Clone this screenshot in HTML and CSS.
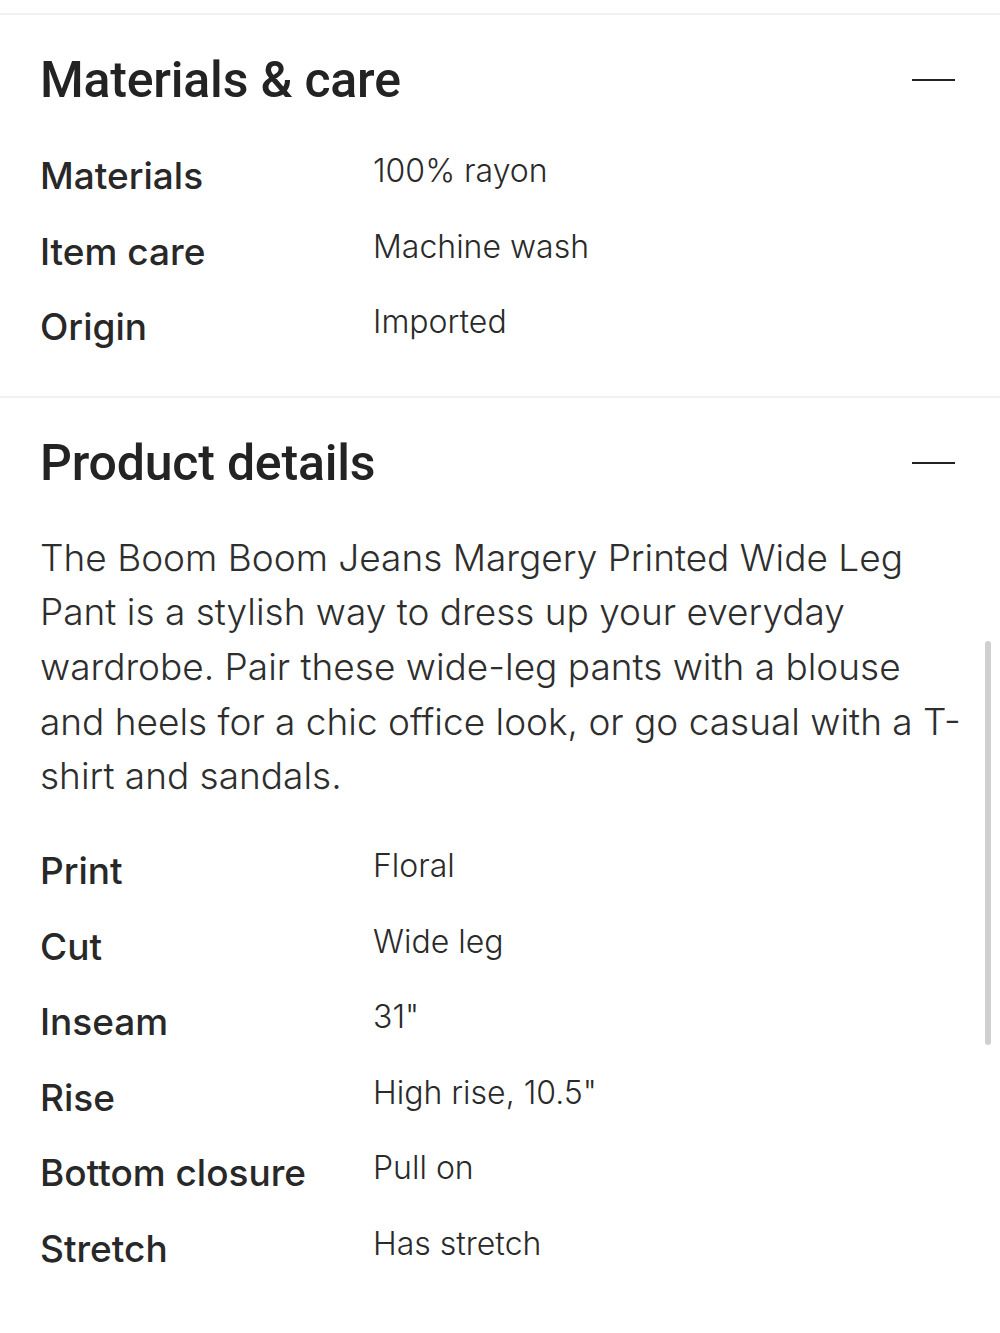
FILE: index.html
```html
<!DOCTYPE html>
<html lang="en">
<head>
  <meta charset="UTF-8" />
  <meta name="viewport" content="width=device-width, initial-scale=1.0" />
  <title>Product info</title>
  <link rel="stylesheet" href="styles.css">
</head>
<body>
  <div class="page">
    <section class="panel panel-care">
      <div class="panel-head">
        <h2>Materials &amp; care</h2>
        <span class="collapse"></span>
      </div>
      <dl class="specs">
        <dt>Materials</dt><dd>100% rayon</dd>
        <dt>Item care</dt><dd>Machine wash</dd>
        <dt>Origin</dt><dd>Imported</dd>
      </dl>
    </section>

    <section class="panel panel-details">
      <div class="panel-head">
        <h2>Product details</h2>
        <span class="collapse"></span>
      </div>
      <p class="desc">The Boom Boom Jeans Margery Printed Wide Leg Pant is a stylish way to dress up your everyday wardrobe. Pair these wide-leg pants with a blouse and heels for a chic office look, or go casual with a T-shirt and sandals.</p>
      <dl class="specs">
        <dt>Print</dt><dd>Floral</dd>
        <dt>Cut</dt><dd>Wide leg</dd>
        <dt>Inseam</dt><dd>31"</dd>
        <dt>Rise</dt><dd>High rise, 10.5"</dd>
        <dt>Bottom closure</dt><dd>Pull on</dd>
        <dt>Stretch</dt><dd>Has stretch</dd>
      </dl>
    </section>
  </div>
  <div class="scrollbar"></div>
</body>
</html>
```

FILE: styles.css
```css
body { margin: 0; background: #fff; color: #222; font-family: Inter, "Noto Sans", Arial, sans-serif; }
.page { padding-top: 13px; }

.panel { border-top: 2px solid #f1f1f1; padding: 37px 45px 31px 40px; }
.panel-head { display: flex; justify-content: space-between; align-items: center; }
.panel-head h2 { margin: 0; font-family: Roboto, Arial, sans-serif; font-size: 50px; line-height: 56px; font-weight: 500; letter-spacing: -0.2px; color: #232323; }
.collapse { display: block; width: 43px; height: 2px; background: #222; }

.specs { display: grid; grid-template-columns: 333px 1fr; grid-auto-rows: 75.5px; align-items: center; margin: 30px 0 0; }
.specs dt { font-size: 37px; font-weight: 500; color: #282828; }
.specs dd { margin: 0 0 10px; font-size: 32px; font-weight: 300; color: #2a2a2a; }

.desc { margin: 40px -10px 0 0; font-size: 37px; line-height: 54.7px; font-weight: 300; color: #2e2e2e; }
.panel-details .specs { margin-top: 29px; }

.scrollbar { position: fixed; top: 641px; right: 9px; width: 6px; height: 404px; border-radius: 3px; background: #cfcfcf; }
```
